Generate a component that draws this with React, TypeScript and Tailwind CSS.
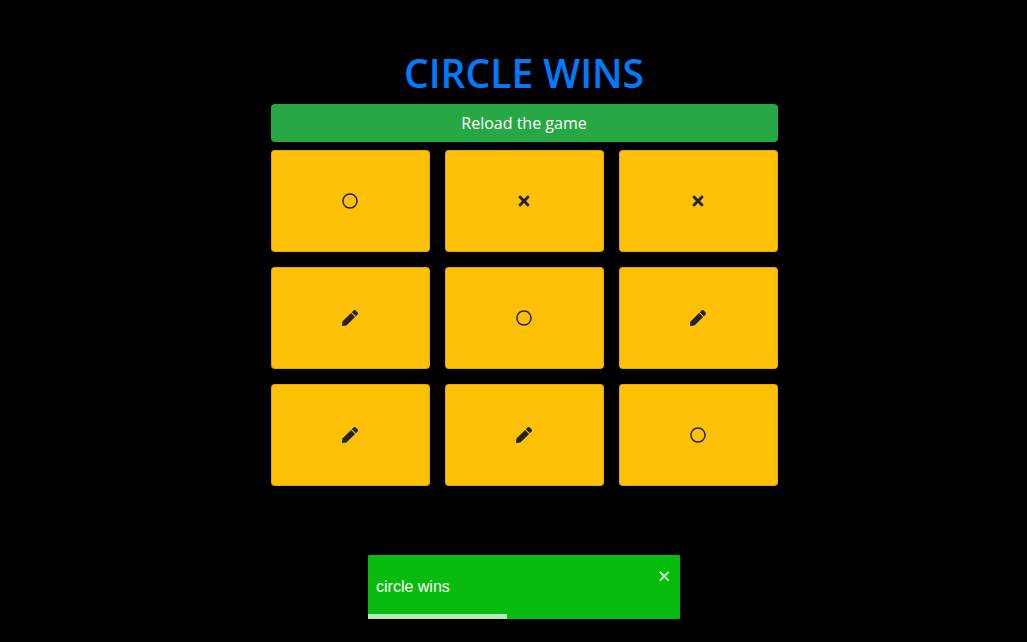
import { useState } from "react";
import { FaPen, FaRegCircle, FaTimes } from "react-icons/fa";

type Mark = "circle" | "cross" | "empty";

const finishedBoard: Mark[] = [
  "circle", "cross", "cross",
  "empty", "circle", "empty",
  "empty", "empty", "circle",
];

function MarkIcon({ mark }: { mark: Mark }) {
  if (mark === "circle") return <FaRegCircle />;
  if (mark === "cross") return <FaTimes />;
  return <FaPen />;
}

function Toast({ message, onClose }: { message: string; onClose: () => void }) {
  return (
    <div
      role="alert"
      className="fixed inset-x-0 bottom-[23px] flex justify-center pl-[21px] font-['Liberation_Sans',Arial,sans-serif]"
    >
      <div className="relative flex min-h-16 w-full max-w-[312px] items-start justify-between rounded-[1px] bg-[#07bc0c] p-2 text-base text-white">
        <div className="self-center">{message}</div>
        <button type="button" aria-label="close" onClick={onClose} className="mt-[5px] cursor-pointer opacity-70">
          <svg aria-hidden="true" viewBox="0 0 14 16" className="h-4 w-[14px] fill-current">
            <path
              fillRule="evenodd"
              d="M7.71 8.23l3.75 3.75-1.48 1.48-3.75-3.75-3.75 3.75L1 11.98l3.75-3.75L1 4.48 2.48 3l3.75 3.75L9.98 3l1.48 1.48-3.75 3.75z"
            />
          </svg>
        </button>
        <div className="absolute bottom-0 left-0 h-[5px] w-[44.6%] bg-white/70" />
      </div>
    </div>
  );
}

export default function App() {
  const [board, setBoard] = useState<Mark[]>(finishedBoard);
  const [winner, setWinner] = useState("circle wins");
  const [toastOpen, setToastOpen] = useState(true);

  const reload = () => {
    setBoard(Array<Mark>(9).fill("empty"));
    setWinner("");
    setToastOpen(false);
  };

  return (
    <div className="min-h-screen bg-black pt-[50px] pl-[21px] font-['Open_Sans','Noto_Sans',sans-serif]">
      <main className="mx-auto flex w-full max-w-[507px] flex-col gap-2">
        {winner && (
          <h1 className="text-center text-[39px] leading-[46px] font-semibold text-[#007bff] uppercase">
            {winner}
          </h1>
        )}
        <button
          type="button"
          onClick={reload}
          className="h-[38px] cursor-pointer rounded bg-[#28a745] text-base text-white"
        >
          Reload the game
        </button>
        <div className="grid grid-cols-3 gap-[15px]">
          {board.map((mark, i) => (
            <button
              key={i}
              type="button"
              aria-label={`Cell ${i + 1}: ${mark}`}
              className="flex h-[102px] cursor-pointer items-center justify-center rounded border border-black/12 bg-[#ffc107] text-base text-[#212529]"
            >
              <MarkIcon mark={mark} />
            </button>
          ))}
        </div>
      </main>
      {toastOpen && <Toast message="circle wins" onClose={() => setToastOpen(false)} />}
    </div>
  );
}
